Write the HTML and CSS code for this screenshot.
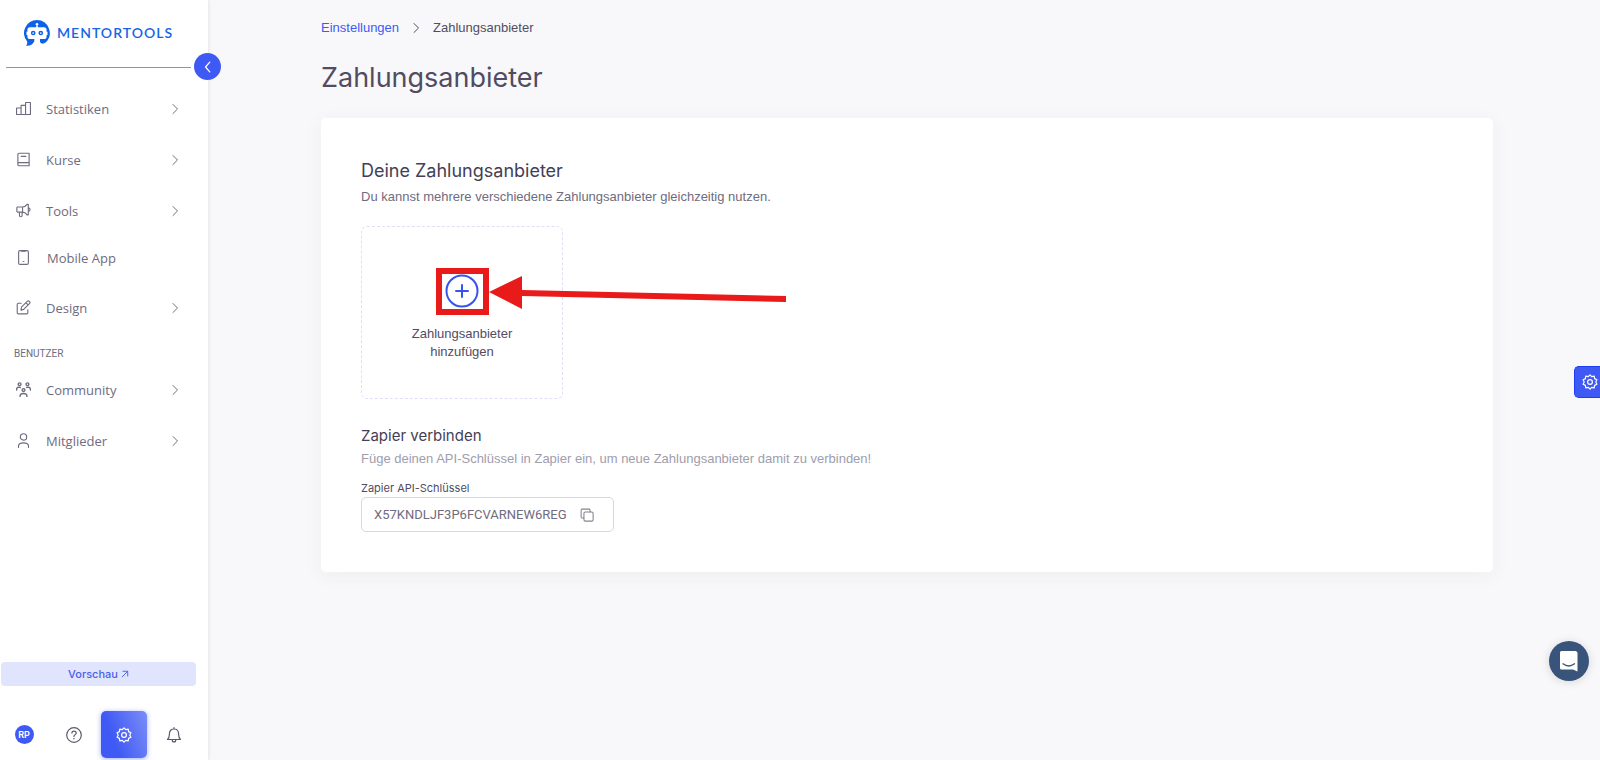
FILE: index.html
```html
<!DOCTYPE html>
<html lang="de">
<head>
<meta charset="utf-8">
<meta name="viewport" content="width=device-width, initial-scale=1">
<title>Zahlungsanbieter – Mentortools</title>
<link rel="stylesheet" href="styles.css">
</head>
<body>
<svg class="sprite" aria-hidden="true">
  <symbol id="chevron" viewBox="0 0 12 12"><path d="M4 1.500 8.500 6 4 10.500"/></symbol>
  <symbol id="gear" viewBox="0 0 16 16"><path d="M6.300 2.600 8 .8l1.700 1.800 2.500-.5.400 2.500 2.300 1.200L13.800 8l1.100 2.200-2.300 1.200-.4 2.500-2.500-.5L8 15.200l-1.700-1.800-2.500.5-.4-2.500-2.300-1.200L2.200 8 1.100 5.800l2.300-1.200.4-2.500z"/><circle cx="8" cy="8" r="2.400"/></symbol>
</svg>
<div class="app">
  <aside class="sidebar">
    <div class="brand">
      <a class="brand-link" href="#">
        <svg class="brand-mark" viewBox="0 0 26 26" aria-hidden="true">
          <path fill="#0d62ea" d="M13 0a13 13 0 0 1 8.500 22.600c-2.200 1.600-4 1.400-5.500-.6v-3h4c1.600 0 2.600-1 2.600-2.600V15h.9v-3.200h-.9V10c0-1.700-1-2.700-2.600-2.700h-6.200V5.500h-1.600v1.800H6c-1.600 0-2.600 1-2.600 2.700v1.800h-.9V15h.9v1.400C3.400 18 4.400 19 6 19h4.300v2.200c-1.500 3.400-4.500 5-8.300 4.600 1.300-1.300 1.500-3 1-4.600A13 13 0 0 1 13 0z"/>
          <circle cx="13" cy="4.300" r="1.300" fill="#fff"/>
          <g fill="none" stroke="#0d62ea" stroke-width="1.500"><circle cx="9.200" cy="13" r="1.600"/><circle cx="16.800" cy="13" r="1.600"/></g>
        </svg>
        <span>MENTORTOOLS</span>
      </a>
      <button class="collapse" type="button" aria-label="Menü einklappen"><svg class="icon" viewBox="0 0 20 20"><path d="M12.500 3 6.500 10l6 7"/></svg></button>
    </div>
    <nav class="nav">
      <a class="item" href="#"><svg class="icon" viewBox="0 0 16 16"><path d="M.6 14.400V7.500h4.800v6.900zM5.400 14.400V4.600h4.800v9.800zM10.200 14.400V1.600h5.200v12.800z"/></svg><span>Statistiken</span><svg class="arrow"><use href="#chevron"/></svg></a>
      <a class="item" href="#"><svg class="icon" viewBox="0 0 16 16"><path d="M2 2.500C2 1.800 2.500 1.300 3.200 1.300H14v13.400H3.200C2.500 14.700 2 14.200 2 13.500zM2 12.500c0-.8.500-1.200 1.200-1.200H14M5.500 4.600h5"/></svg><span>Kurse</span><svg class="arrow"><use href="#chevron"/></svg></a>
      <a class="item" href="#"><svg class="icon" viewBox="0 0 16 16"><path d="M1.600 4.200H7v5.500H1.600L.9 9V5zM7 4.200c2 0 3.700-1.200 4.800-2.800h1.300v11.200h-1.300C10.700 11 9 9.700 7 9.700M13.100 5c2.600.3 2.600 3.700 0 4M3.700 9.700v4c0 1.300 2.800 1.300 2.800 0v-4"/></svg><span>Tools</span><svg class="arrow"><use href="#chevron"/></svg></a>
      <a class="item plain" href="#"><svg class="icon" viewBox="0 0 16 16"><rect x="2.800" y=".7" width="10.400" height="14.600" rx="1.500"/><path d="M6 1.200h4M7.600 12.300h.8"/></svg><span>Mobile App</span></a>
      <a class="item" href="#"><svg class="icon" viewBox="0 0 16 16"><path d="M5.500 3.500H2.600c-.9 0-1.300.5-1.300 1.300v8.700c0 .8.500 1.300 1.300 1.300h8.700c.8 0 1.300-.5 1.300-1.300v-3M5.300 10.800l.5-3.100L12 1.500c.7-.7 1.600-.6 2.300 0 .7.700.7 1.600 0 2.300L8.200 10zM10.600 3l2.300 2.300"/></svg><span>Design</span><svg class="arrow"><use href="#chevron"/></svg></a>
      <h2 class="nav-title">BENUTZER</h2>
      <a class="item" href="#"><svg class="icon thick" viewBox="0 0 16 16"><circle cx="3.800" cy="2.400" r="1.500"/><circle cx="12.200" cy="2.400" r="1.500"/><circle cx="8" cy="8.600" r="1.500"/><path d="M.6 8.500c0-3 2-3.300 4-2.700M15.400 8.500c0-3-2-3.300-4-2.700M4.300 15.400c0-4.200 7.400-4.200 7.400 0"/></svg><span>Community</span><svg class="arrow"><use href="#chevron"/></svg></a>
      <a class="item" href="#"><svg class="icon" viewBox="0 0 16 16"><circle cx="8" cy="4.200" r="3.400"/><path d="M2.700 15.500v-1.700c0-4.300 10.600-4.300 10.600 0v1.700"/></svg><span>Mitglieder</span><svg class="arrow"><use href="#chevron"/></svg></a>
    </nav>
    <a class="preview" href="#"><span>Vorschau</span><svg class="icon" viewBox="0 0 10 10"><path d="M1.500 8.500 8.300 1.700M2.500 1.600h5.900v5.900"/></svg></a>
    <div class="tools">
      <button class="tool" type="button"><span class="avatar">RP</span></button>
      <button class="tool" type="button" aria-label="Hilfe"><svg class="icon" viewBox="0 0 16 16"><circle cx="8" cy="8" r="7.300"/><path d="M5.900 6.100c0-2.600 4.300-2.600 4.300 0C10.200 7.700 8 7.600 8 9.500M8 11.300v.5"/></svg></button>
      <button class="tool active" type="button" aria-label="Einstellungen"><svg class="icon"><use href="#gear"/></svg></button>
      <button class="tool" type="button" aria-label="Benachrichtigungen"><svg class="icon" viewBox="0 0 16 16"><path d="M1.500 12.500c1.600-1.300 1.900-2.600 1.900-5.500 0-3.300 1.800-5 4.600-5s4.600 1.700 4.600 5c0 2.900.3 4.200 1.900 5.500zM8 2V.6M6.200 12.700c0 3 3.600 3 3.600 0"/></svg></button>
    </div>
  </aside>
  <main class="main">
    <nav class="crumbs" aria-label="Brotkrumen"><a href="#">Einstellungen</a><svg class="arrow"><use href="#chevron"/></svg><span>Zahlungsanbieter</span></nav>
    <h1>Zahlungsanbieter</h1>
    <section class="card">
      <h2>Deine Zahlungsanbieter</h2>
      <p class="lead">Du kannst mehrere verschiedene Zahlungsanbieter gleichzeitig nutzen.</p>
      <div class="provider">
        <button class="add" type="button">
          <svg class="plus" viewBox="0 0 34 34"><circle cx="17" cy="17" r="15.500"/><path d="M17 11v12M11 17h12"/></svg>
          <span>Zahlungsanbieter hinzufügen</span>
        </button>
        <svg class="pointer" viewBox="0 0 352 48" aria-hidden="true"><path fill="none" stroke="#e81a1a" stroke-width="6" d="M3 3h47v41H3z"/><path fill="#e81a1a" d="M53 24 86 8v14l264 6v6l-264-6v13z"/></svg>
      </div>
      <h3>Zapier verbinden</h3>
      <p class="hint">Füge deinen API-Schlüssel in Zapier ein, um neue Zahlungsanbieter damit zu verbinden!</p>
      <label class="key-label" for="key">Zapier API-Schlüssel</label>
      <div class="field">
        <input id="key" type="text" value="X57KNDLJF3P6FCVARNEW6REG" readonly>
        <button class="copy" type="button" aria-label="Kopieren"><svg class="icon" viewBox="0 0 16 16"><rect x="4.500" y="4.500" width="10.500" height="10.500" rx="1.500"/><path d="M4.500 11.500H2.600c-.8 0-1.300-.5-1.300-1.300V2.600c0-.8.500-1.300 1.300-1.300h7.600c.8 0 1.300.5 1.300 1.300v1.900"/></svg></button>
      </div>
    </section>
  </main>
</div>
<button class="side-tab" type="button" aria-label="Schnelleinstellungen"><svg class="icon"><use href="#gear"/></svg></button>
<button class="chat" type="button" aria-label="Chat öffnen"><svg viewBox="0 0 20 22"><path fill="#fff" d="M2.500 1h13.800c1.200 0 2.200 1 2.200 2.200V21.500l-4.500-2H2.500C1.600 19.500 1 18.800 1 18V2.800C1 1.800 1.600 1 2.500 1z"/><path fill="none" stroke="#39547b" stroke-width="1.300" stroke-linecap="round" d="M4 13.800c3.500 2.700 8 2.700 11.500 0"/></svg></button>
</body>
</html>
```
FILE: styles.css
```css
* { box-sizing: border-box; }
body {
  margin: 0;
  background: #f8f8fa;
  color: #524c62;
  font-family: "Liberation Sans", Arial, sans-serif;
  font-size: 13px;
  line-height: 18px;
}
h1, h2, h3, p { margin: 0; font-weight: 400; }
h1, h2, h3 { font-family: Inter, "Liberation Sans", sans-serif; }
a { color: inherit; text-decoration: none; }
button { padding: 0; border: 0; background: none; color: inherit; font: inherit; cursor: pointer; }
.sprite { position: absolute; width: 0; height: 0; }
.icon, .arrow { fill: none; stroke: currentColor; stroke-width: 1.2; stroke-linecap: round; stroke-linejoin: round; }
.icon { width: 16px; height: 16px; }
.icon.thick { stroke-width: 1.5; }
.arrow { width: 12px; height: 12px; stroke-width: 1; }
.app { display: flex; min-height: 100vh; }

.sidebar {
  display: flex;
  flex-direction: column;
  flex: 0 0 208px;
  background: #fff;
  box-shadow: 0 0 4px rgba(60, 60, 90, .16);
}
.brand {
  position: relative;
  height: 68px;
  margin: 0 17px 15px 6px;
  padding: 20px 0 0 18px;
  border-bottom: 1px solid #9592a4;
}
.brand-link {
  display: flex;
  align-items: center;
  gap: 7px;
  color: #1664e8;
  font-family: Lato, sans-serif;
  font-size: 14px;
  font-weight: 600;
  letter-spacing: 1px;
}
.brand-mark { width: 26px; height: 26px; }
.collapse {
  position: absolute;
  right: -30px;
  bottom: -13px;
  display: grid;
  place-items: center;
  width: 27px;
  height: 27px;
  border-radius: 50%;
  background: #3f5af4;
  color: #fff;
}
.collapse .icon { width: 14px; height: 14px; stroke-width: 1.8; }
.nav {
  flex: 1;
  color: #6f6b80;
  font-family: "Open Sans", sans-serif;
}
.item {
  display: flex;
  align-items: center;
  gap: 15px;
  height: 51px;
  padding: 0 27px 0 16px;
}
.item .icon { width: 15px; height: 15px; }
.item .arrow { margin-left: auto; }
.item.plain { gap: 16px; height: 43px; margin-bottom: 3px; }
.nav-title {
  height: 31px;
  padding: 12px 14px 0;
  font-size: 10px;
  font-family: Roboto, sans-serif;
}
.preview {
  display: flex;
  align-items: center;
  justify-content: center;
  gap: 3px;
  height: 24px;
  margin: 0 12px 25px 1px;
  border-radius: 4px;
  background: #e0e4fd;
  color: #4a60ee;
  font-family: Inter, sans-serif;
  font-size: 11px;
  font-weight: 500;
}
.preview .icon { width: 8px; height: 8px; }
.tools { display: flex; gap: 4px; padding: 0 0 2px 1px; color: #5d5870; }
.tool {
  display: grid;
  place-items: center;
  width: 46px;
  height: 47px;
  border-radius: 5px;
}
.tool.active {
  background: linear-gradient(70deg, #3f5af4 30%, #7c8df8);
  box-shadow: 0 1px 5px rgba(63, 90, 244, .5);
  color: #fff;
}
.avatar {
  width: 19px;
  height: 19px;
  border-radius: 50%;
  background: #3f5af4;
  color: #fff;
  font-family: Inter, sans-serif;
  font-size: 9px;
  font-weight: 600;
  line-height: 19px;
}

.main { flex: 1; min-width: 0; padding: 19px 107px 40px 113px; }
.crumbs { display: flex; align-items: center; gap: 11px; }
.crumbs a { color: #3f5af4; }
h1 { margin: 24px 0 23px; font-size: 27px; line-height: 34px; }
.card {
  padding: 40px;
  border-radius: 5px;
  background: #fff;
  box-shadow: 0 4px 20px rgba(50, 50, 80, .05);
}
.card h2 { color: #443e56; font-size: 18px; line-height: 26px; }
.lead { margin: 4px 0 20px; color: #6f6b80; }
.provider { position: relative; width: 202px; }
.add {
  display: flex;
  flex-direction: column;
  align-items: center;
  gap: 17px;
  width: 100%;
  height: 173px;
  padding: 47px 40px 0;
  border: 1px dashed #dedffa;
  border-radius: 6px;
}
.plus { width: 34px; height: 34px; fill: none; stroke: #3653f0; stroke-width: 2; stroke-linecap: round; }
.pointer { position: absolute; left: 75px; top: 42px; width: 352px; height: 48px; pointer-events: none; }
.card h3 { margin: 25px 0 0; color: #443e56; font-size: 15px; line-height: 24px; }
.hint { margin: 2px 0 12px; color: #a09dac; }
.key-label { display: block; font-family: Inter, sans-serif; font-size: 11px; line-height: 16px; }
.field {
  display: flex;
  align-items: center;
  width: 253px;
  height: 35px;
  margin-top: 1px;
  padding: 0 19px 0 12px;
  border: 1px solid #d8d7de;
  border-radius: 5px;
}
.field input {
  flex: 1;
  min-width: 0;
  padding: 0;
  border: 0;
  outline: 0;
  background: none;
  color: #6f6b80;
  font: 13px Roboto, sans-serif;
}
.copy { display: grid; color: #85828f; }
.copy .icon { width: 14px; height: 14px; }

.side-tab {
  position: fixed;
  right: 0;
  top: 366px;
  display: grid;
  place-items: center;
  width: 26px;
  height: 32px;
  padding-left: 5px;
  border: 1px solid #1c3df2;
  border-right: 0;
  border-radius: 5px 0 0 5px;
  background: #3f5af4;
  color: #fff;
}
.chat {
  position: fixed;
  right: 11px;
  bottom: 79px;
  display: grid;
  place-items: center;
  width: 40px;
  height: 40px;
  border-radius: 50%;
  background: #39547b;
  box-shadow: 0 1px 10px rgba(0, 0, 0, .14);
}
.chat svg { width: 20px; height: 22px; }
```
